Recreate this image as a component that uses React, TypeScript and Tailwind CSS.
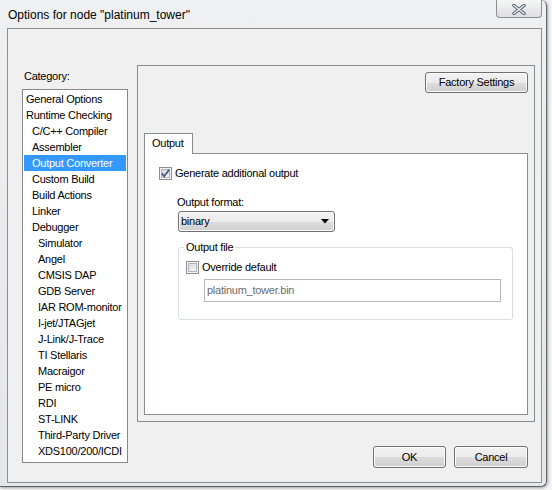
import React from 'react';

const categories: [string, number][] = [
  ['General Options', 0],
  ['Runtime Checking', 0],
  ['C/C++ Compiler', 1],
  ['Assembler', 1],
  ['Output Converter', 1],
  ['Custom Build', 1],
  ['Build Actions', 1],
  ['Linker', 1],
  ['Debugger', 1],
  ['Simulator', 2],
  ['Angel', 2],
  ['CMSIS DAP', 2],
  ['GDB Server', 2],
  ['IAR ROM-monitor', 2],
  ['I-jet/JTAGjet', 2],
  ['J-Link/J-Trace', 2],
  ['TI Stellaris', 2],
  ['Macraigor', 2],
  ['PE micro', 2],
  ['RDI', 2],
  ['ST-LINK', 2],
  ['Third-Party Driver', 2],
  ['XDS100/200/ICDI', 2],
];

const indent = ['pl-[2px]', 'pl-[8px]', 'pl-[14px]'];

const buttonCls =
  'flex items-center justify-center rounded-[3px] border border-[#707070] bg-[linear-gradient(#f2f2f2,#ebebeb_50%,#dddddd_50%,#cfcfcf)] shadow-[inset_0_0_0_1px_#fbfbfb] text-black';

function CheckBox({ checked }: { checked: boolean }) {
  return (
    <svg width="13" height="13" viewBox="0 0 13 13" className="shrink-0">
      <defs>
        <linearGradient id={checked ? 'cbon' : 'cboff'} x1="0" y1="0" x2="1" y2="1">
          <stop offset="0" stopColor="#d8d8d8" />
          <stop offset="1" stopColor="#fafafa" />
        </linearGradient>
      </defs>
      <rect x="0.5" y="0.5" width="12" height="12" fill="#f4f4f4" stroke="#8f8f8f" />
      <rect x="2.5" y="2.5" width="8" height="8" fill={`url(#${checked ? 'cbon' : 'cboff'})`} stroke="#b0b4ba" />
      {checked && (
        <path d="M2.8 6.4 L5.2 9.2 L10.2 2.6" fill="none" stroke="#4b5d8e" strokeWidth="1.8" />
      )}
    </svg>
  );
}

export default function App() {
  const selected = 'Output Converter';

  return (
    <div className="h-[490px] w-[552px] bg-[#f4f4f4] font-['Liberation_Sans',Arial,sans-serif] text-[11px] text-black">
      <div className="flex h-[487px] w-[547px] flex-col rounded-r-[6px] border-r border-b border-[#5f6368] bg-[linear-gradient(#eef0f2,#e4e7ea)] pr-[4px] pb-[3px] pl-[7px] shadow-[1px_1px_3px_rgba(0,0,0,0.35)]">
        {/* title bar */}
        <div className="flex h-[28px] items-start justify-between">
          <span className="mt-[8px] ml-[1px] text-[12px] leading-[15px]">
            Options for node "platinum_tower"
          </span>
          <div className="flex h-[18px] w-[46px] items-center justify-center rounded-b-[4px] border-x border-b border-[#8c8f94] bg-[linear-gradient(#f6f6f6,#dedfe1)]">
            <svg width="14" height="11" viewBox="0 0 14 11" className="mt-[1px]">
              <path d="M2 1.5 L12 9.5 M12 1.5 L2 9.5" stroke="#5b6274" strokeWidth="3.4" strokeLinecap="round" />
              <path d="M2 1.5 L12 9.5 M12 1.5 L2 9.5" stroke="#eceef2" strokeWidth="1.4" strokeLinecap="round" />
            </svg>
          </div>
        </div>

        {/* dialog body */}
        <div className="flex flex-1 border border-[#8e8f8f] bg-[#f0f0f0] pt-[36px] pl-[14px] tracking-[-0.25px]">
          {/* category column */}
          <div className="flex w-[106px] flex-col">
            <div className="mt-[3px] h-[16px] pl-[2px] leading-[16px]">Category:</div>
            <div className="mt-[5px] flex h-[374px] flex-col border border-[#828790] bg-white p-[1px]">
              {categories.map(([name, level]) => (
                <div
                  key={name}
                  className={`h-[16px] shrink-0 leading-[16px] whitespace-nowrap ${indent[level]} ${
                    name === selected ? 'bg-[#3399ff] text-white' : ''
                  }`}
                >
                  {name}
                </div>
              ))}
            </div>
          </div>

          {/* options column */}
          <div className="ml-[9px] flex w-[398px] flex-col">
            <div className="flex h-[357px] flex-col border border-[#898c95] p-[6px]">
              <button className={`${buttonCls} h-[21px] w-[103px] self-end`}>Factory Settings</button>

              <div className="relative z-10 mt-[40px] -mb-px h-[21px] w-[49px] border-x border-t border-[#898c95] bg-white pl-[7px] leading-[19px]">
                Output
              </div>
              <div className="flex h-[262px] flex-col border border-[#898c95] bg-white">
                <label className="mt-[13px] ml-[14px] flex h-[13px] items-center gap-[3px] leading-[13px]">
                  <CheckBox checked />
                  <span>Generate additional output</span>
                </label>

                <div className="mt-[14px] ml-[32px] leading-[16px]">Output format:</div>
                <div className={`${buttonCls} mt-[1px] ml-[33px] h-[21px] w-[157px] justify-between! pr-[5px] pl-[2px]`}>
                  <span>binary</span>
                  <svg width="8" height="5" viewBox="0 0 8 5">
                    <path d="M0 0 H8 L4 4.5 Z" fill="#000" />
                  </svg>
                </div>

                <div className="relative mt-[15px] ml-[33px] h-[73px] w-[335px] rounded-[3px] border border-[#d5dfe5]">
                  <span className="absolute -top-[8px] left-[5px] bg-white px-[2px] leading-[15px]">
                    Output file
                  </span>
                  <label className="mt-[13px] ml-[7px] flex h-[13px] items-center gap-[3px] leading-[13px]">
                    <CheckBox checked={false} />
                    <span>Override default</span>
                  </label>
                  <div className="mt-[5px] ml-[25px] h-[23px] w-[297px] border border-[#b5b8bd] pl-[2px] leading-[21px] text-[#6d6d6d]">
                    platinum_tower.bin
                  </div>
                </div>
              </div>
            </div>

            <div className="mt-[24px] flex justify-end gap-[8px] pr-[7px]">
              <button className={`${buttonCls} h-[22px] w-[73px]`}>OK</button>
              <button className={`${buttonCls} h-[22px] w-[74px]`}>Cancel</button>
            </div>
          </div>
        </div>
      </div>
    </div>
  );
}
